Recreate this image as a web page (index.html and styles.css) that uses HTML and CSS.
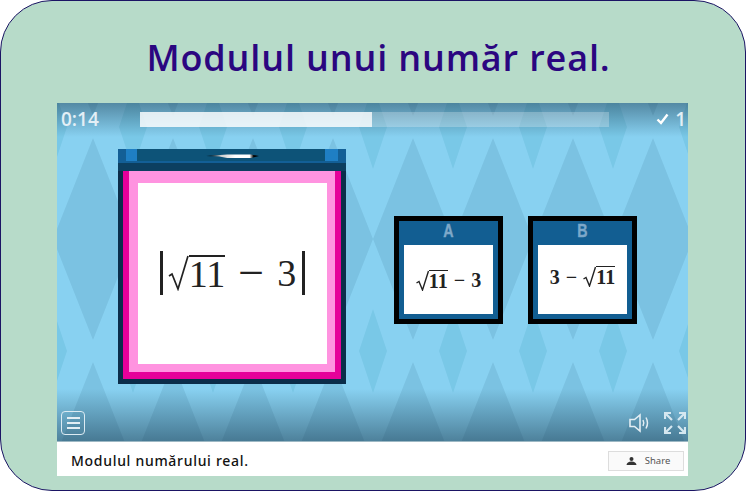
FILE: index.html
```html
<!DOCTYPE html>
<html lang="en">

<head>
    <meta charset="UTF-8">
    <meta name="viewport" content="width=device-width, initial-scale=1.0">
    <title>Modulul unui număr real.</title>
    <link rel="stylesheet" href="styles.css">
</head>

<body>
    <div class="page-card">
        <h1 class="page-title">Modulul unui număr real.</h1>

        <div class="player">
            <div class="stage">
                <svg class="stage-bg" width="631" height="338" xmlns="http://www.w3.org/2000/svg">
                    <defs>
                        <pattern id="diamonds" x="-4" y="-88" width="80" height="224" patternUnits="userSpaceOnUse">
                            <polygon points="40,123 80,224 0,224" fill="#7bc2e2" />
                            <polygon points="0,0 80,0 40,101" fill="#7bc2e2" />
                            <polygon points="80,70 94,112 80,154 66,112" fill="#79c8e7" />
                            <polygon points="0,70 14,112 0,154 -14,112" fill="#79c8e7" />
                        </pattern>
                    </defs>
                    <rect width="631" height="338" fill="#88d1f1" />
                    <rect width="631" height="338" fill="url(#diamonds)" />
                </svg>
                <div class="shade-top"></div>
                <div class="shade-bottom"></div>

                <!-- question card -->
                <div class="question">
                    <div class="lid">
                        <div class="lid-inner"><span class="lid-glint"></span></div>
                    </div>
                    <div class="lid-edge"></div>
                    <div class="question-frame">
                        <div class="question-pink">
                            <div class="question-face">
                                <div class="math math-big">
                                    <span class="abs-bar"></span>
                                    <span class="radical">
                                        <svg width="21" height="36" viewBox="0 0 21 36">
                                            <path d="M1 21 L4 19 L10 34 L20 1" fill="none" stroke="#222" stroke-width="1.7" />
                                        </svg>
                                        <span class="radicand">11</span>
                                    </span>
                                    <span class="minus">−</span>
                                    <span class="digit">3</span>
                                    <span class="abs-bar"></span>
                                </div>
                            </div>
                        </div>
                    </div>
                </div>

                <!-- answers -->
                <div class="answers">
                    <div class="answer">
                        <div class="answer-label">A</div>
                        <div class="answer-face">
                            <div class="math math-small">
                                <span class="radical">
                                    <svg width="13" height="21" viewBox="0 0 13 21">
                                        <path d="M0.5 13 L3 11.5 L6.5 20 L12.5 1" fill="none" stroke="#222" stroke-width="1.4" />
                                    </svg>
                                    <span class="radicand">11</span>
                                </span>
                                <span class="minus">−</span>
                                <span>3</span>
                            </div>
                        </div>
                    </div>
                    <div class="answer">
                        <div class="answer-label">B</div>
                        <div class="answer-face">
                            <div class="math math-small math-raised">
                                <span>3</span>
                                <span class="minus">−</span>
                                <span class="radical">
                                    <svg width="13" height="21" viewBox="0 0 13 21">
                                        <path d="M0.5 13 L3 11.5 L6.5 20 L12.5 1" fill="none" stroke="#222" stroke-width="1.4" />
                                    </svg>
                                    <span class="radicand">11</span>
                                </span>
                            </div>
                        </div>
                    </div>
                </div>

                <!-- hud on top of the game -->
                <div class="hud-top">
                    <span class="timer">0:14</span>
                    <div class="progress">
                        <div class="progress-fill"></div>
                    </div>
                    <span class="score">
                        <svg width="13" height="12" viewBox="0 0 13 12">
                            <path d="M1.5 6.5 L5 10 L11.5 1.5" fill="none" stroke="#fff" stroke-width="2.4" />
                        </svg>
                        1
                    </span>
                </div>
                <div class="hud-bottom">
                    <div class="menu-btn">
                        <span></span>
                        <span></span>
                        <span></span>
                    </div>
                    <div class="hud-right">
                        <svg width="22" height="20" viewBox="0 0 22 20">
                            <path d="M1 6.5 H5.5 L11 2 V18 L5.5 13.5 H1 Z" fill="none" stroke="#e3eef4" stroke-width="1.6" />
                            <path d="M14 7 Q15.6 10 14 13" fill="none" stroke="#e3eef4" stroke-width="1.5" />
                            <path d="M17 4.5 Q20 10 17 15.5" fill="none" stroke="#e3eef4" stroke-width="1.5" />
                        </svg>
                        <svg width="22" height="22" viewBox="0 0 22 22">
                            <g fill="none" stroke="#d5e7f0" stroke-width="2.2">
                                <path d="M1 7 V1 H7 M1 1 L8 8" />
                                <path d="M21 7 V1 H15 M21 1 L14 8" />
                                <path d="M1 15 V21 H7 M1 21 L8 14" />
                                <path d="M21 15 V21 H15 M21 21 L14 14" />
                            </g>
                        </svg>
                    </div>
                </div>
            </div>

            <div class="player-footer">
                <span class="player-caption">Modulul numărului real.</span>
                <button class="share-btn" type="button">
                    <svg width="11" height="8" viewBox="0 0 11 8">
                        <circle cx="5.5" cy="2" r="2" fill="#333" />
                        <path d="M0.5 8 Q1 4.5 5.5 4.5 Q10 4.5 10.5 8 Z" fill="#333" />
                    </svg>
                    Share
                </button>
            </div>
        </div>
    </div>
</body>

</html>
```

FILE: styles.css
```css
* {
    box-sizing: border-box;
}

body {
    margin: 0;
    padding: 0;
    background-color: #fff;
}

.page-card {
    width: 746px;
    height: 491px;
    padding-left: 56px;
    background-color: #b7dbc9;
    border: 1px solid #1b1464;
    border-radius: 52px;
    overflow: hidden;
}

.page-title {
    margin: 0;
    height: 102px;
    padding: 36px 45px 0 0;
    text-align: center;
    font-family: "Open Sans", sans-serif;
    font-size: 36px;
    font-weight: 600;
    letter-spacing: 0.85px;
    line-height: 41px;
    color: #2b0680;
    white-space: nowrap;
}

.player {
    width: 631px;
}

.stage {
    position: relative;
    height: 338px;
    display: flex;
    align-items: flex-start;
    padding-left: 61px;
    overflow: hidden;
}

.stage-bg {
    position: absolute;
    left: 0;
    top: 0;
}

.shade-top,
.shade-bottom {
    position: absolute;
    left: 0;
    right: 0;
}

.shade-top {
    top: 0;
    height: 34px;
    background: linear-gradient(rgba(20, 50, 70, 0.45), rgba(20, 50, 70, 0));
}

.shade-bottom {
    bottom: 0;
    height: 52px;
    background: linear-gradient(rgba(20, 50, 70, 0), rgba(20, 50, 70, 0.5));
}

/* question card */
.question {
    position: relative;
    width: 228px;
    height: 235px;
    margin-top: 46px;
}

.lid {
    height: 12px;
    padding: 0 8px;
    background-color: #135f96;
}

.lid-inner {
    height: 12px;
    display: flex;
    align-items: center;
    justify-content: center;
    background-color: #0d5378;
    border-left: 11px solid #1f7fc4;
    border-right: 13px solid #1f7fc4;
}

.lid-glint {
    width: 53px;
    height: 4px;
    margin-left: 3px;
    margin-top: 2px;
    background: linear-gradient(90deg, #000 0%, #000 8%, #ccc 28%, #fff 55%, #fff 82%, #000 90%, #000 100%);
    clip-path: polygon(0 50%, 40% 15%, 85% 15%, 100% 50%, 85% 100%, 40% 100%, 25% 65%);
}

.lid-edge {
    height: 10px;
    border-top: 2px solid #135f96;
    background-color: #0c3f60;
}

.question-frame {
    height: 213px;
    padding: 0 5px 5px;
    background-color: #0b2d4a;
}

.question-pink {
    height: 208px;
    padding: 0 6px 7px;
    background-color: #e6009a;
}

.question-face {
    height: 201px;
    padding: 12px 8px 8px 9px;
    background-color: #ff93e0;
}

.question-face .math {
    width: 100%;
    height: 100%;
    background-color: #fff;
}

.math {
    display: flex;
    align-items: center;
    justify-content: center;
    font-family: "Liberation Serif", serif;
    color: #222;
}

.math-big {
    font-size: 38px;
    line-height: 38px;
    padding-bottom: 1px;
}

.abs-bar {
    width: 2.5px;
    height: 44px;
    background-color: #222;
}

.abs-bar:first-child {
    margin-right: 5px;
}

.abs-bar:last-child {
    margin-left: 6px;
}

.radical {
    display: inline-flex;
    align-items: flex-start;
}

.radicand {
    display: block;
}

.math-big .radicand {
    border-top: 2px solid #222;
    height: 36px;
    line-height: 34px;
}

.math-big .minus {
    margin: 0 13px;
    font-size: 46px;
}

.math-small {
    font-size: 20px;
    font-weight: 700;
    line-height: 20px;
    padding-top: 1px;
}

.math-small .radicand {
    border-top: 1px solid #222;
    height: 21px;
    line-height: 21px;
}

.math-small .minus {
    margin: 0 6px;
}

.math-raised {
    padding-top: 0;
    padding-bottom: 6px;
}

/* answers */
.answers {
    display: flex;
    gap: 25px;
    margin-top: 113px;
    margin-left: 48px;
    position: relative;
}

.answer {
    width: 109px;
    height: 108px;
    padding: 0 5px 5px;
    display: flex;
    flex-direction: column;
    background-color: #125e92;
    border: 5px solid #000;
}

.answer-label {
    height: 24px;
    text-align: center;
    font-family: "Liberation Sans", sans-serif;
    font-size: 19px;
    font-weight: 700;
    line-height: 19px;
    color: #7da8c9;
    -webkit-text-stroke: 0.4px #7da8c9;
    transform: scaleX(0.75);
}

.answer-face {
    flex: 1;
    display: flex;
    align-items: center;
    justify-content: center;
    background-color: #fff;
}

/* hud */
.hud-top {
    position: absolute;
    left: 4px;
    right: 2px;
    top: 5px;
    display: flex;
    align-items: flex-start;
    color: #e3eff6;
    font-family: "Open Sans", sans-serif;
    font-size: 19px;
    font-weight: 600;
    line-height: 22px;
}

.timer {
    width: 79px;
}

.progress {
    width: 469px;
    height: 15px;
    margin-top: 4px;
    background-color: rgba(255, 255, 255, 0.25);
}

.progress-fill {
    width: 232px;
    height: 15px;
    background-color: rgba(255, 255, 255, 0.76);
}

.score {
    margin-left: auto;
    display: flex;
    align-items: center;
    gap: 6px;
}

.hud-bottom {
    position: absolute;
    left: 4px;
    right: 2px;
    bottom: 6px;
    display: flex;
    align-items: center;
    justify-content: space-between;
}

.menu-btn {
    width: 24px;
    height: 24px;
    display: flex;
    flex-direction: column;
    justify-content: center;
    align-items: center;
    gap: 3px;
    border: 1px solid #dcebf3;
    border-radius: 4px;
}

.menu-btn span {
    width: 13px;
    height: 2px;
    background-color: #e3eef4;
}

.hud-right {
    display: flex;
    align-items: center;
    gap: 13px;
}

/* footer below the game */
.player-footer {
    height: 35px;
    padding: 0 4px 0 14px;
    display: flex;
    align-items: center;
    justify-content: space-between;
    background-color: #fff;
    border-top: 1px solid #9db8c4;
}

.player-caption {
    font-family: "Noto Sans", sans-serif;
    font-size: 14px;
    font-weight: 500;
    letter-spacing: 0.7px;
    color: #111;
    padding-top: 3px;
}

.share-btn {
    width: 76px;
    height: 20px;
    padding: 0 0 0 4px;
    margin-top: 3px;
    display: flex;
    align-items: center;
    justify-content: center;
    gap: 8px;
    font-family: "Noto Sans", sans-serif;
    font-size: 9.5px;
    color: #555;
    background-color: #fafafa;
    border: 1px solid #ddd;
}
```
